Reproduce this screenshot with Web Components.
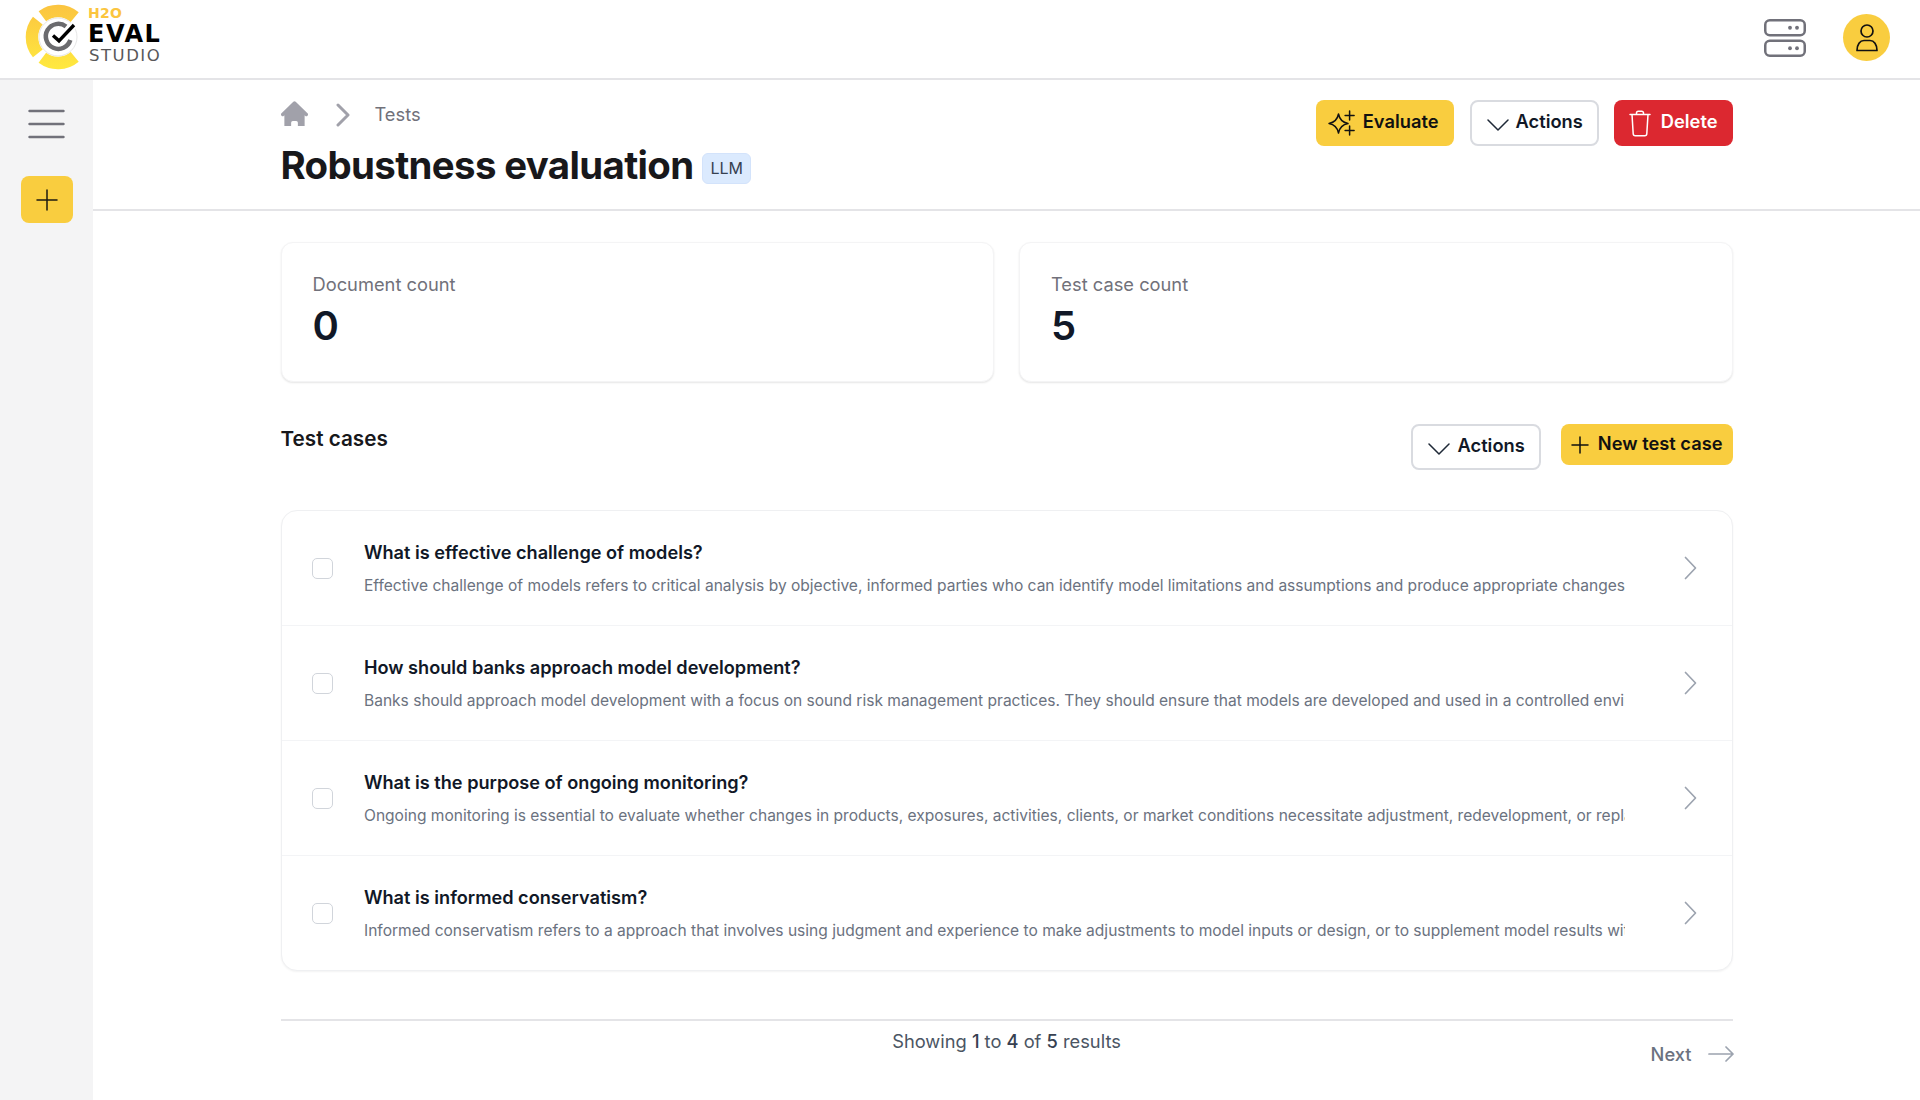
<!DOCTYPE html>
<html lang="en">
<head>
<meta charset="utf-8">
<title>Robustness evaluation</title>
<style>
html,body{margin:0;padding:0;background:#fff;height:1100px;overflow:hidden}
body{font-family:Inter,"Liberation Sans",sans-serif;color:#111827}
</style>
</head>
<body>
<eval-app>
  <eval-topbar slot="top"></eval-topbar>
  <eval-rail slot="rail"></eval-rail>
  <eval-pagehead title="Robustness evaluation" badge="LLM" crumb="Tests"></eval-pagehead>
  <eval-body>
    <eval-stat label="Document count" value="0"></eval-stat>
    <eval-stat label="Test case count" value="5"></eval-stat>
    <eval-caselist slot="list">
      <eval-case heading="What is effective challenge of models?">Effective challenge of models refers to critical analysis by objective, informed parties who can identify model limitations and assumptions and produce appropriate changes.</eval-case>
      <eval-case heading="How should banks approach model development?">Banks should approach model development with a focus on sound risk management practices. They should ensure that models are developed and used in a controlled environment with proper documentation.</eval-case>
      <eval-case heading="What is the purpose of ongoing monitoring?">Ongoing monitoring is essential to evaluate whether changes in products, exposures, activities, clients, or market conditions necessitate adjustment, redevelopment, or replacement of the model.</eval-case>
      <eval-case heading="What is informed conservatism?">Informed conservatism refers to a approach that involves using judgment and experience to make adjustments to model inputs or design, or to supplement model results with additional analysis.</eval-case>
    </eval-caselist>
    <eval-pager slot="pager"></eval-pager>
  </eval-body>
</eval-app>
<script>
const ICONS={
 sparkle:'<svg style="overflow:visible" width="27" height="27" viewBox="0 0 27 27" fill="none" stroke="#111" stroke-width="1.500" stroke-linejoin="round" stroke-linecap="round"><path d="M10.500 4c1.100 5.600 3.600 8.400 9.500 9.500-5.900 1.100-8.400 3.900-9.500 9.500-1.100-5.600-3.600-8.400-9.500-9.500 5.900-1.100 8.400-3.900 9.500-9.500z"/><path d="M21.600 1v9M17.100 5.500h9M21.600 16v9M17.100 20.500h9"/></svg>',
 chev:'<svg style="margin-top:3px" width="22" height="12" viewBox="0 0 22 12" fill="none" stroke="#1f2937" stroke-width="1.500" stroke-linecap="round" stroke-linejoin="round"><path d="M1 1l10 10L21 1"/></svg>',
 trash:'<svg width="22" height="27" viewBox="0 0 22 27" fill="none" stroke="#fff" stroke-width="1.500" stroke-linecap="round" stroke-linejoin="round"><path d="M1 4.500h20M7.500 4.500V3a1.800 1.800 0 0 1 1.800-1.800h3.400A1.800 1.800 0 0 1 14.500 3v1.500M3 4.500l1.200 19.300a2 2 0 0 0 2 1.900h9.600a2 2 0 0 0 2-1.900L19 4.500"/></svg>',
 plus:'<svg width="22" height="22" viewBox="0 0 22 22" fill="none" stroke="#1c1a10" stroke-width="1.500" stroke-linecap="round"><path d="M11 1v20M1 11h20"/></svg>',
 plus18:'<svg width="18" height="18" viewBox="0 0 18 18" fill="none" stroke="#111" stroke-width="1.500" stroke-linecap="round"><path d="M9 1v16M1 9h16"/></svg>'
};
function def(name,css,html){
  customElements.define(name,class extends HTMLElement{
    connectedCallback(){
      if(this.shadowRoot)return;
      const r=this.attachShadow({mode:'open'});
      const attr=k=>this.getAttribute(k)||'';
      r.innerHTML='<style>'+css+'</style>'+(typeof html==='function'?html(attr):html);
    }
  });
}
def('eval-app',`
  :host{display:grid;grid-template-columns:93px 1fr;grid-template-rows:80px 1fr;width:1920px;height:1100px;overflow:hidden}
  .t{grid-column:1/3;display:block}
  main{min-width:0;display:flex;flex-direction:column}
`,`<div class="t"><slot name="top"></slot></div><slot name="rail"></slot><main><slot></slot></main>`);

def('eval-logo',`
  :host{display:flex;align-items:center;gap:0}
  svg{display:block;flex:none}
  .w{display:flex;flex-direction:column;margin-left:-2px;margin-bottom:3.500px;font-family:"DejaVu Sans","Liberation Sans",sans-serif}
  .a{font-size:14px;line-height:12px;font-weight:700;color:#fbc53f;letter-spacing:.3px}
  .b{font-size:24px;line-height:23px;font-weight:700;color:#000;letter-spacing:1.550px;margin-top:4px}
  .c{font-size:16.500px;line-height:15px;font-weight:400;color:#58585a;letter-spacing:1.500px;margin-top:2px;margin-left:1px}
`,`<svg width="90" height="76" viewBox="0 0 90 76" fill="none">
  <defs><linearGradient id="g" gradientUnits="userSpaceOnUse" x1="0" y1="6" x2="0" y2="70"><stop offset="0" stop-color="#fbc440"/><stop offset="1" stop-color="#ffe93f"/></linearGradient></defs>
  <g stroke="url(#g)" stroke-width="12.500">
    <path d="M74.700 18.100A26 26 0 0 0 42.350 17.200"/>
    <path d="M37.800 21.600A26 26 0 0 0 37.800 54.400"/>
    <path d="M42.350 58.800A26 26 0 0 0 74.700 57.900"/>
  </g>
  <circle cx="58" cy="38" r="19" stroke="#e6e6e6" stroke-width="1"/>
  <path d="M66 27.500A12.500 12.500 0 1 0 70.300 41" stroke="#6b6b6e" stroke-width="4.500"/>
  <path d="M53 36.500l6 5.300L74 26" stroke="#fff" stroke-width="7"/>
  <path d="M53 36.500l6 5.300L74 26" stroke="#000" stroke-width="3.400"/>
</svg><div class="w"><span class="a">H2O</span><span class="b">EVAL</span><span class="c">STUDIO</span></div>`);

def('eval-topbar',`
  :host{display:flex;align-items:center;justify-content:space-between;height:80px;box-sizing:border-box;border-bottom:2px solid #e4e4e7;background:#fff;padding:0 30px 3px 0}
  .r{display:flex;align-items:center;gap:37px}
  .u{width:47px;height:47px;border-radius:50%;background:#f9cd3f;display:flex;align-items:center;justify-content:center}
  svg{display:block}
  eval-logo{margin-bottom:1px}
`,`<eval-logo></eval-logo><div class="r">
  <svg width="42" height="38" viewBox="0 0 42 38" fill="none" stroke="#71717a" stroke-width="2.500"><rect x="1.250" y="1.250" width="39.500" height="15" rx="4.500"/><rect x="1.250" y="21.750" width="39.500" height="15" rx="4.500"/><g fill="#71717a" stroke="none"><circle cx="26" cy="8.750" r="1.900"/><circle cx="33" cy="8.750" r="1.900"/><circle cx="26" cy="29.250" r="1.900"/><circle cx="33" cy="29.250" r="1.900"/></g></svg>
  <div class="u"><svg width="26" height="30" viewBox="0 0 26 30" fill="none" stroke="#111" stroke-width="1.700" stroke-linejoin="round"><circle cx="13" cy="8" r="6"/><path d="M3 27.500c0-6 3-10 7-10h6c4 0 7 4 7 10z"/></svg></div>
</div>`);

def('eval-rail',`
  :host{display:flex;flex-direction:column;align-items:center;background:#f4f4f5;width:93px;padding-top:29px;box-sizing:border-box}
  .add{width:52px;height:47px;border-radius:8px;background:#f9cd3f;display:flex;align-items:center;justify-content:center;margin-top:37px}
  svg{display:block}
`,`<svg width="37" height="30" viewBox="0 0 37 30" fill="none" stroke="#71717a" stroke-width="2.400" stroke-linecap="round"><path d="M1.500 2h34M1.500 15h34M1.500 28h34"/></svg><div class="add">${ICONS.plus}</div>`);

def('eval-btn',`
  :host{display:inline-flex;align-items:center;box-sizing:border-box;border-radius:8px;font:600 18.300px/1 Inter,sans-serif;height:46px;white-space:nowrap}
  :host([kind=primary]){background:#f9cd3f;color:#111;padding:0 15px 0 12px;gap:8px}
  :host([kind=ghost]){background:#fff;color:#111827;border:2px solid #d9dbe0;padding:0 14px 0 15px;gap:7px}
  :host([kind=danger]){background:#dc2830;color:#fff;padding:0 15px 0 15px;gap:10px}
  .i{display:flex;align-items:center}
  .x{padding-bottom:3px}
  svg{display:block}
`,a=>`<span class="i">${ICONS[a('icon')]||''}</span><span class="x"><slot></slot></span>`);

def('eval-pagehead',`
  :host{display:block;height:131px;box-sizing:border-box;border-bottom:2px solid #e4e4e7;background:#fff}
  .in{width:1452px;margin:0 auto;display:flex;justify-content:space-between;padding-top:20px}
  .crumb{display:flex;align-items:center;height:30px;color:#71717a;font-size:18.300px;line-height:26px}
  .crumb span{padding-bottom:2px}
  .crumb svg{display:block}
  .crumb .s{margin:0 25px 0 28px}
  h1{margin:11px 0 0;font-size:38.400px;line-height:48px;font-weight:700;letter-spacing:-.64px;color:#18181b;display:flex;align-items:center}
  .b{margin-left:9px;font-size:16px;font-weight:400;letter-spacing:0;line-height:29px;height:29px;padding:0 7px;background:#dbeafe;border:1px solid #d3e3fb;border-radius:6px;color:#374151;margin-top:6px}
  .act{display:flex;gap:15px}
  .act .first{margin-right:1px}
  .home{margin-bottom:4px}
`,a=>`<div class="in"><div>
  <div class="crumb"><svg class="home" width="27" height="25" viewBox="2 1.800 16 15.200" preserveAspectRatio="none" fill="#a1a1aa"><path d="M10.707 2.293a1 1 0 00-1.414 0l-7 7a1 1 0 001.414 1.414L4 10.414V17a1 1 0 001 1h2a1 1 0 001-1v-2a1 1 0 011-1h2a1 1 0 011 1v2a1 1 0 001 1h2a1 1 0 001-1v-6.586l.293.293a1 1 0 001.414-1.414l-7-7z"/></svg>
  <svg class="s" width="14" height="24" viewBox="0 0 14 24" fill="none" stroke="#a1a1aa" stroke-width="3" stroke-linecap="round" stroke-linejoin="round"><path d="M2 2l10 10L2 22"/></svg><span>${a('crumb')}</span></div>
  <h1>${a('title')}<span class="b">${a('badge')}</span></h1>
</div><div class="act">
  <eval-btn class="first" kind="primary" icon="sparkle">Evaluate</eval-btn>
  <eval-btn kind="ghost" icon="chev">Actions</eval-btn>
  <eval-btn kind="danger" icon="trash">Delete</eval-btn>
</div></div>`);

def('eval-body',`
  :host{display:block;width:1452px;margin:0 auto;padding-top:31px}
  .cards{display:grid;grid-template-columns:1fr 1fr;gap:25px}
  .bar{display:flex;justify-content:space-between;align-items:flex-start;margin-top:42px}
  h2{margin:0;font-size:20.700px;line-height:30px;font-weight:600;color:#18181b}
  .btns{display:flex;gap:20px;align-items:flex-start}
  .new{height:41px;padding:0 10px 0 10px;gap:9px}
`,`<div class="cards"><slot></slot></div>
<div class="bar"><h2>Test cases</h2><div class="btns">
  <eval-btn kind="ghost" icon="chev">Actions</eval-btn>
  <eval-btn class="new" kind="primary" icon="plus18">New test case</eval-btn>
</div></div>
<slot name="list"></slot><slot name="pager"></slot>`);

def('eval-stat',`
  :host{display:block;height:140px;box-sizing:border-box;background:#fff;border:1px solid #f4f4f5;border-radius:12px;box-shadow:0 1px 2px rgba(0,0,0,.1);padding:29px 31px 0}
  .l{font-size:18.300px;line-height:24px;color:#71717a;font-weight:400}
  .v{font-size:40px;line-height:44px;font-weight:600;color:#111827;margin-top:8px}
`,a=>`<div class="l">${a('label')}</div><div class="v">${a('value')}</div>`);

def('eval-caselist',`
  :host{display:block;margin-top:40px;border:1px solid #eff0f2;border-radius:16px;box-shadow:0 1px 2px rgba(0,0,0,.05);background:#fff;overflow:hidden}
`,`<slot></slot>`);

def('eval-case',`
  :host{display:flex;align-items:center;height:115px;box-sizing:border-box;border-bottom:1px solid #f3f4f6;padding-left:30px}
  :host(:last-child){border-bottom:0;height:114px}
  .cb{flex:none;width:21px;height:21px;box-sizing:border-box;border:1.500px solid #d1d5db;border-radius:5px;background:#fff}
  .t{margin-left:31.500px;width:1261px;min-width:0;flex:none;padding-bottom:1px}
  .h{font-size:18.150px;line-height:28px;font-weight:600;color:#111827}
  .d{font-size:15.550px;line-height:24px;color:#6b7280;white-space:nowrap;overflow:hidden;margin-top:8px}
  svg{flex:none;display:block;margin-left:58.500px}
`,a=>`<div class="cb"></div><div class="t"><div class="h">${a('heading')}</div><div class="d"><slot></slot></div></div>
<svg width="13" height="24" viewBox="0 0 13 24" fill="none" stroke="#9ca3af" stroke-width="1.700" stroke-linecap="round" stroke-linejoin="round"><path d="M1.500 1.500L11.500 12 1.500 22.500"/></svg>`);

def('eval-pager',`
  :host{display:grid;grid-template-columns:1fr auto 1fr;margin-top:48px;border-top:2px solid #e4e4e7;padding-top:6px;align-items:start}
  .m{grid-column:2;font-size:18.300px;line-height:28px;color:#4b5563}
  .m b{font-weight:500;color:#374151}
  .n{grid-column:3;justify-self:end;display:flex;align-items:center;gap:16px;font-size:18.300px;line-height:28px;color:#6b7280;font-weight:500;margin-top:13px;margin-right:-1px}
  svg{display:block}
`,`<div class="m">Showing <b>1</b> to <b>4</b> of <b>5</b> results</div>
<div class="n">Next <svg width="26" height="16" viewBox="0 0 26 16" fill="none" stroke="#9ca3af" stroke-width="1.700" stroke-linecap="round" stroke-linejoin="round"><path d="M1 8h24M18 1l7 7-7 7"/></svg></div>`);
</script>
</body>
</html>
